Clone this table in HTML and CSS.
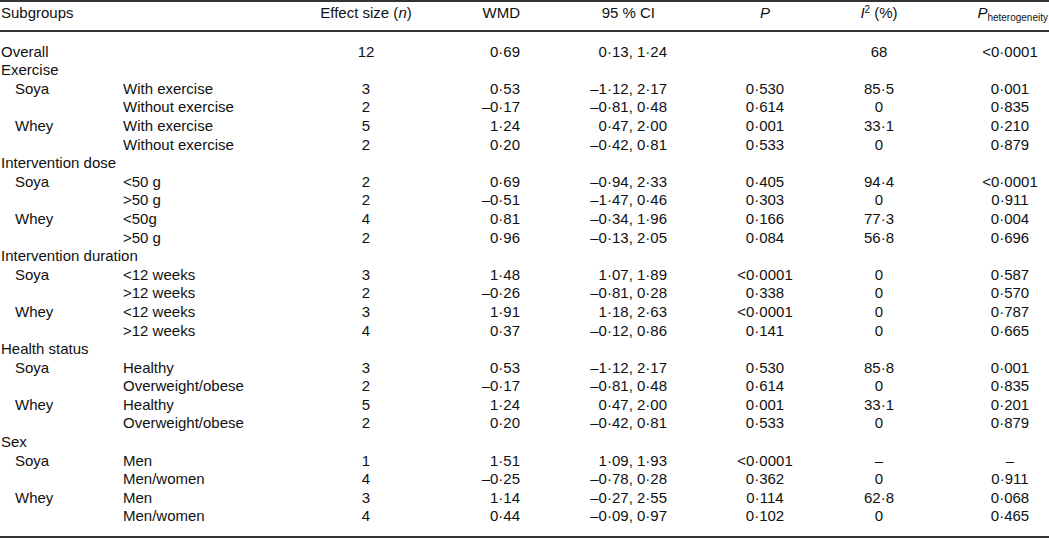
FILE: index.html
```html
<!DOCTYPE html>
<html lang="en">
<head>
<meta charset="utf-8">
<title>Subgroup analysis</title>
<link rel="stylesheet" href="styles.css">
</head>
<body>
<table class="tbl">
  <colgroup>
    <col class="c-a"><col class="c-b"><col class="c-c"><col class="c-d">
    <col class="c-e"><col class="c-f"><col class="c-g"><col class="c-h">
  </colgroup>
  <thead>
    <tr>
      <th class="h-a" colspan="2">Subgroups</th>
      <th class="num-c">Effect size (<i>n</i>)</th>
      <th class="num-d">WMD</th>
      <th class="h-e">95 % CI</th>
      <th class="num-f">P</th>
      <th class="num-g"><i>I</i><sup>2</sup> (%)</th>
      <th class="h-h"><i>P</i><sub>heterogeneity</sub></th>
    </tr>
  </thead>
  <tbody>
    <tr class="first"><td>Overall</td><td></td><td class="num-c">12</td><td class="num-d">0·69</td><td class="num-e">0·13, 1·24</td><td class="num-f"></td><td class="num-g">68</td><td class="num-h">&lt;0·0001</td></tr>
    <tr><td colspan="8">Exercise</td></tr>
    <tr><td class="sub">Soya</td><td>With exercise</td><td class="num-c">3</td><td class="num-d">0·53</td><td class="num-e">–1·12, 2·17</td><td class="num-f">0·530</td><td class="num-g">85·5</td><td class="num-h">0·001</td></tr>
    <tr><td></td><td>Without exercise</td><td class="num-c">2</td><td class="num-d">–0·17</td><td class="num-e">–0·81, 0·48</td><td class="num-f">0·614</td><td class="num-g">0</td><td class="num-h">0·835</td></tr>
    <tr><td class="sub">Whey</td><td>With exercise</td><td class="num-c">5</td><td class="num-d">1·24</td><td class="num-e">0·47, 2·00</td><td class="num-f">0·001</td><td class="num-g">33·1</td><td class="num-h">0·210</td></tr>
    <tr><td></td><td>Without exercise</td><td class="num-c">2</td><td class="num-d">0·20</td><td class="num-e">–0·42, 0·81</td><td class="num-f">0·533</td><td class="num-g">0</td><td class="num-h">0·879</td></tr>
    <tr><td colspan="8">Intervention dose</td></tr>
    <tr><td class="sub">Soya</td><td>&lt;50 g</td><td class="num-c">2</td><td class="num-d">0·69</td><td class="num-e">–0·94, 2·33</td><td class="num-f">0·405</td><td class="num-g">94·4</td><td class="num-h">&lt;0·0001</td></tr>
    <tr><td></td><td>&gt;50 g</td><td class="num-c">2</td><td class="num-d">–0·51</td><td class="num-e">–1·47, 0·46</td><td class="num-f">0·303</td><td class="num-g">0</td><td class="num-h">0·911</td></tr>
    <tr><td class="sub">Whey</td><td>&lt;50g</td><td class="num-c">4</td><td class="num-d">0·81</td><td class="num-e">–0·34, 1·96</td><td class="num-f">0·166</td><td class="num-g">77·3</td><td class="num-h">0·004</td></tr>
    <tr><td></td><td>&gt;50 g</td><td class="num-c">2</td><td class="num-d">0·96</td><td class="num-e">–0·13, 2·05</td><td class="num-f">0·084</td><td class="num-g">56·8</td><td class="num-h">0·696</td></tr>
    <tr><td colspan="8">Intervention duration</td></tr>
    <tr><td class="sub">Soya</td><td>&lt;12 weeks</td><td class="num-c">3</td><td class="num-d">1·48</td><td class="num-e">1·07, 1·89</td><td class="num-f">&lt;0·0001</td><td class="num-g">0</td><td class="num-h">0·587</td></tr>
    <tr><td></td><td>&gt;12 weeks</td><td class="num-c">2</td><td class="num-d">–0·26</td><td class="num-e">–0·81, 0·28</td><td class="num-f">0·338</td><td class="num-g">0</td><td class="num-h">0·570</td></tr>
    <tr><td class="sub">Whey</td><td>&lt;12 weeks</td><td class="num-c">3</td><td class="num-d">1·91</td><td class="num-e">1·18, 2·63</td><td class="num-f">&lt;0·0001</td><td class="num-g">0</td><td class="num-h">0·787</td></tr>
    <tr><td></td><td>&gt;12 weeks</td><td class="num-c">4</td><td class="num-d">0·37</td><td class="num-e">–0·12, 0·86</td><td class="num-f">0·141</td><td class="num-g">0</td><td class="num-h">0·665</td></tr>
    <tr><td colspan="8">Health status</td></tr>
    <tr><td class="sub">Soya</td><td>Healthy</td><td class="num-c">3</td><td class="num-d">0·53</td><td class="num-e">–1·12, 2·17</td><td class="num-f">0·530</td><td class="num-g">85·8</td><td class="num-h">0·001</td></tr>
    <tr><td></td><td>Overweight/obese</td><td class="num-c">2</td><td class="num-d">–0·17</td><td class="num-e">–0·81, 0·48</td><td class="num-f">0·614</td><td class="num-g">0</td><td class="num-h">0·835</td></tr>
    <tr><td class="sub">Whey</td><td>Healthy</td><td class="num-c">5</td><td class="num-d">1·24</td><td class="num-e">0·47, 2·00</td><td class="num-f">0·001</td><td class="num-g">33·1</td><td class="num-h">0·201</td></tr>
    <tr><td></td><td>Overweight/obese</td><td class="num-c">2</td><td class="num-d">0·20</td><td class="num-e">–0·42, 0·81</td><td class="num-f">0·533</td><td class="num-g">0</td><td class="num-h">0·879</td></tr>
    <tr><td colspan="8">Sex</td></tr>
    <tr><td class="sub">Soya</td><td>Men</td><td class="num-c">1</td><td class="num-d">1·51</td><td class="num-e">1·09, 1·93</td><td class="num-f">&lt;0·0001</td><td class="num-g">–</td><td class="num-h">–</td></tr>
    <tr><td></td><td>Men/women</td><td class="num-c">4</td><td class="num-d">–0·25</td><td class="num-e">–0·78, 0·28</td><td class="num-f">0·362</td><td class="num-g">0</td><td class="num-h">0·911</td></tr>
    <tr><td class="sub">Whey</td><td>Men</td><td class="num-c">3</td><td class="num-d">1·14</td><td class="num-e">–0·27, 2·55</td><td class="num-f">0·114</td><td class="num-g">62·8</td><td class="num-h">0·068</td></tr>
    <tr class="last"><td></td><td>Men/women</td><td class="num-c">4</td><td class="num-d">0·44</td><td class="num-e">–0·09, 0·97</td><td class="num-f">0·102</td><td class="num-g">0</td><td class="num-h">0·465</td></tr>
  </tbody>
</table>
</body>
</html>
```

FILE: styles.css
```css
html, body {
  margin: 0;
  padding: 0;
  background: #ffffff;
}

body {
  font-family: "Liberation Sans", Arial, sans-serif;
  font-size: 15px;
  color: #111111;
}

.tbl {
  width: 1049px;
  table-layout: fixed;
  border-collapse: collapse;
  border-spacing: 0;
  border-top: 2px solid #333333;
  border-bottom: 2px solid #333333;
}

.c-a { width: 123px; }
.c-b { width: 197px; }
.c-c { width: 92px; }
.c-d { width: 108px; }
.c-e { width: 147px; }
.c-f { width: 183px; }
.c-g { width: 58px; }
.c-h { width: 141px; }

.tbl th,
.tbl td {
  padding: 0;
  line-height: 18.6px;
  font-weight: normal;
  white-space: nowrap;
  vertical-align: top;
}

.tbl td:first-child,
.tbl th:first-child {
  padding-left: 1px;
}

.tbl thead th {
  padding-top: 2px;
  padding-bottom: 7px;
  border-bottom: 2px solid #333333;
}

.tbl th.h-a { text-align: left; }
.tbl th.h-e { text-align: right; padding-right: 12px; }
.tbl th.num-f { font-style: italic; }
.tbl th.h-h { text-align: right; padding-right: 1px; }

.tbl sup {
  font-size: 10px;
  line-height: 0;
  vertical-align: 5px;
}

.tbl sub {
  font-size: 10px;
  line-height: 0;
  vertical-align: -3px;
}

.tbl .num-c { text-align: center; }
.tbl .num-d { text-align: right; }
.tbl .num-e { text-align: right; }
.tbl .num-f { text-align: center; padding-left: 13px; }
.tbl .num-g { text-align: center; }
.tbl .num-h { text-align: center; padding-left: 63px; }

.tbl td.sub { padding-left: 15px; }

.tbl tr.first td { padding-top: 11px; }
.tbl tr.last td { padding-bottom: 10px; }
```
